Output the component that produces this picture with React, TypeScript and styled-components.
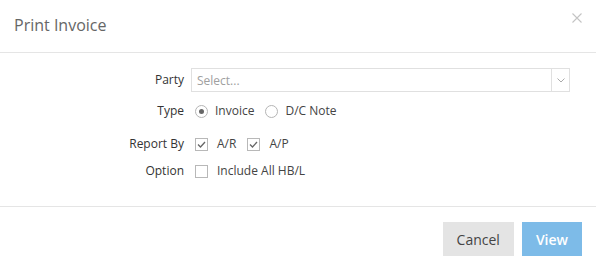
import styled, { createGlobalStyle } from 'styled-components';

const GlobalStyle = createGlobalStyle`
  html, body {
    margin: 0;
    padding: 0;
    background: #ffffff;
    font-family: 'Open Sans', 'Liberation Sans', sans-serif;
  }
  * {
    box-sizing: border-box;
  }
`;

const App = () => {
  return (
    <Modal>
      <GlobalStyle />
      <Header>
        <h4 className="title">Print Invoice</h4>
        <CloseButton aria-label="close">
          <svg width="10" height="10" viewBox="0 0 10 10">
            <path d="M0.5 0.5 L9.5 9.5 M9.5 0.5 L0.5 9.5" stroke="#c4c4c4" strokeWidth="1.1" fill="none" />
          </svg>
        </CloseButton>
      </Header>
      <Body>
        <Row $mt={0}>
          <Label>Party</Label>
          <SelectBox>
            <span className="placeholder">Select...</span>
            <span className="arrow">
              <svg width="8" height="5" viewBox="0 0 8 5">
                <path d="M0.5 0.5 L4 4 L7.5 0.5" stroke="#aaaaaa" strokeWidth="1" fill="none" />
              </svg>
            </span>
          </SelectBox>
        </Row>
        <Row $mt={7}>
          <Label>Type</Label>
          <Options>
            <Choice>
              <Radio $checked={true} />
              Invoice
            </Choice>
            <Choice>
              <Radio $checked={false} />
              D/C Note
            </Choice>
          </Options>
        </Row>
        <Row $mt={9}>
          <Label>Report By</Label>
          <Options>
            <Choice>
              <Check checked={true} />
              A/R
            </Choice>
            <Choice>
              <Check checked={true} />
              A/P
            </Choice>
          </Options>
        </Row>
        <Row $mt={3}>
          <Label>Option</Label>
          <Options>
            <Choice>
              <Check checked={false} />
              Include All HB/L
            </Choice>
          </Options>
        </Row>
      </Body>
      <Footer>
        <Button $primary={false}>Cancel</Button>
        <Button $primary={true}>View</Button>
      </Footer>
    </Modal>
  );
};
export default App;

const Check = ({ checked }: { checked: boolean }) => (
  <CheckBox>
    {checked && (
      <svg width="11" height="11" viewBox="0 0 11 11">
        <path d="M2 5.5 L4.5 8 L9 3" stroke="#666666" strokeWidth="1.3" fill="none" />
      </svg>
    )}
  </CheckBox>
);

const Modal = styled.section`
  width: 596px;
  height: 270px;
  display: flex;
  flex-direction: column;
  background-color: #ffffff;
  color: #333333;
`;

const Header = styled.header`
  height: 53px;
  display: flex;
  align-items: center;
  padding: 0 14px;
  border-bottom: 1px solid #e5e5e5;
  > .title {
    margin: 0;
    font-size: 16px;
    font-weight: 400;
    color: #666666;
    line-height: 22px;
    padding-bottom: 2px;
  }
`;

const CloseButton = styled.button`
  margin-left: auto;
  margin-right: -1px;
  margin-top: -17px;
  width: 12px;
  height: 12px;
  padding: 0;
  border: none;
  background: none;
  display: flex;
  align-items: center;
  justify-content: center;
`;

const Body = styled.div`
  padding: 15px 26px 0 0;
  height: 153px;
  display: flex;
  flex-direction: column;
`;

const Row = styled.div<{ $mt: number }>`
  display: grid;
  grid-template-columns: 184px 1fr;
  column-gap: 7px;
  align-items: center;
  height: 24px;
  margin-top: ${(p) => p.$mt}px;
`;

const Label = styled.label`
  text-align: right;
  font-size: 12px;
  color: #333333;
  line-height: 16px;
`;

const SelectBox = styled.div`
  height: 24px;
  border: 1px solid #e0e0e0;
  display: flex;
  align-items: center;
  > .placeholder {
    flex: 1;
    padding-left: 5px;
    font-size: 12px;
    color: #a0a0a0;
  }
  > .arrow {
    width: 18px;
    height: 100%;
    border-left: 1px solid #e0e0e0;
    display: flex;
    align-items: center;
    justify-content: center;
  }
`;

const Options = styled.div`
  display: flex;
  align-items: center;
  gap: 11px;
  padding-left: 4px;
`;

const Choice = styled.span`
  display: flex;
  align-items: center;
  gap: 7px;
  font-size: 12px;
  color: #444444;
  line-height: 16px;
`;

const Radio = styled.span<{ $checked: boolean }>`
  width: 13px;
  height: 13px;
  border-radius: 50%;
  border: 1px solid #b5b5b5;
  display: flex;
  align-items: center;
  justify-content: center;
  &::after {
    content: '';
    width: 5px;
    height: 5px;
    border-radius: 50%;
    background-color: #666666;
    display: ${(p) => (p.$checked ? 'block' : 'none')};
  }
`;

const CheckBox = styled.span`
  width: 13px;
  height: 13px;
  margin-right: 2px;
  border: 1px solid #b8b8b8;
  display: flex;
  align-items: center;
  justify-content: center;
`;

const Footer = styled.footer`
  border-top: 1px solid #e5e5e5;
  padding: 15px 14px 0 0;
  display: flex;
  justify-content: flex-end;
  gap: 8px;
`;

const Button = styled.button<{ $primary: boolean }>`
  height: 34px;
  padding: 0 14px;
  border: none;
  font-family: 'Open Sans', 'Liberation Sans', sans-serif;
  font-size: 14px;
  background-color: ${(p) => (p.$primary ? '#7dbbe8' : '#e4e4e4')};
  color: ${(p) => (p.$primary ? '#ffffff' : '#444444')};
  font-weight: ${(p) => (p.$primary ? 600 : 400)};
`;
